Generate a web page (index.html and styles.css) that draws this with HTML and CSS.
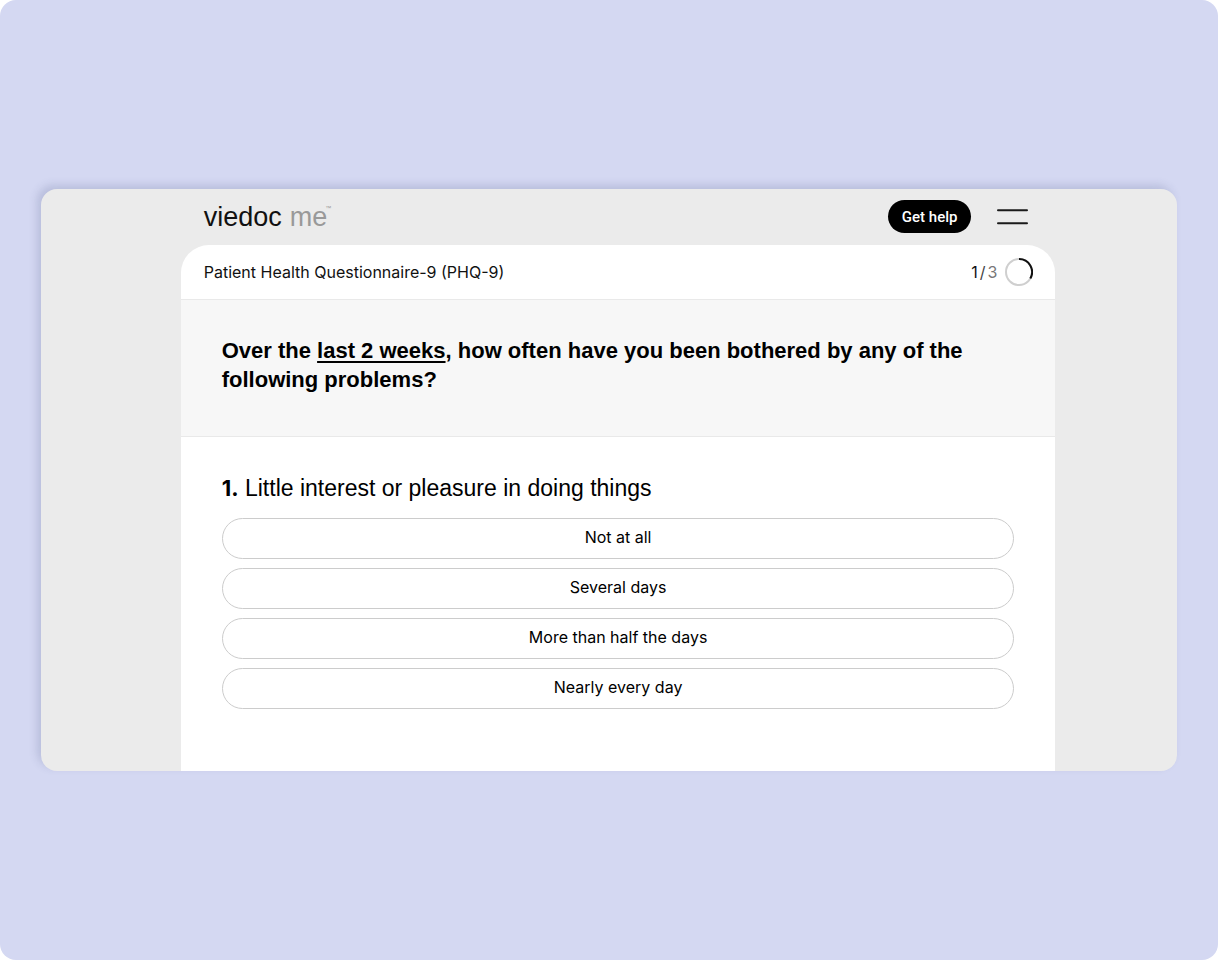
FILE: index.html
```html
<!DOCTYPE html>
<html lang="en">
<head>
<meta charset="utf-8">
<meta name="viewport" content="width=device-width, initial-scale=1">
<title>Patient Health Questionnaire-9 (PHQ-9)</title>
<link rel="stylesheet" href="styles.css">
</head>
<body>
<div class="stage">
  <div class="window">
    <header class="topbar">
      <a class="logo" href="#">viedoc <span class="logo-me">me</span><span class="logo-tm">™</span></a>
      <div class="topbar-actions">
        <button class="help" type="button">Get help</button>
        <button class="menu" type="button" aria-label="Menu">
          <svg width="31" height="19" viewBox="0 0 31 19" aria-hidden="true"><path d="M1 3.3h29M1 16.3h29" stroke="#1a1a1a" stroke-width="2" stroke-linecap="round"/></svg>
        </button>
      </div>
    </header>
    <main class="card">
      <div class="form-bar">
        <h1 class="form-title">Patient Health Questionnaire-9 (PHQ-9)</h1>
        <div class="progress">
          <span class="count"><span>1</span><span class="count-slash">/</span><span class="count-total">3</span></span>
          <svg width="28" height="28" viewBox="0 0 28 28" fill="none" aria-hidden="true"><circle cx="14" cy="14" r="13" stroke="#cfcfcf" stroke-width="2"/><path d="M14 1A13 13 0 0 1 25.3 20.5" stroke="#111" stroke-width="2"/></svg>
        </div>
      </div>
      <section class="prompt">
        <h2 class="prompt-text">Over the <u class="period">last 2 weeks</u>, how often have you been bothered by any of the following problems?</h2>
      </section>
      <section class="question">
        <h3 class="question-text" id="q1"><b class="number">1.</b> Little interest or pleasure in doing things</h3>
        <div class="options" role="group" aria-labelledby="q1">
          <button class="option" type="button">Not at all</button>
          <button class="option" type="button">Several days</button>
          <button class="option" type="button">More than half the days</button>
          <button class="option" type="button">Nearly every day</button>
        </div>
      </section>
    </main>
  </div>
</div>
</body>
</html>
```
FILE: styles.css
```css
* {
  box-sizing: border-box;
}

body {
  margin: 0;
  background: #fff;
  color: #000;
  font-family: Inter, "Liberation Sans", sans-serif;
}

button {
  font: inherit;
  color: inherit;
  cursor: pointer;
}

h1, h2, h3 {
  margin: 0;
}

.stage {
  min-height: 100vh;
  padding: 41px;
  display: flex;
  align-items: center;
  background: #d4d8f2;
  border-radius: 16px;
}

.window {
  flex: 1;
  min-width: 0;
  padding: 0 10.7% 0 12.3%;
  background: #ebebeb;
  border-radius: 16px;
  overflow: hidden;
  box-shadow: -4px -4px 8px rgba(60, 70, 120, 0.18);
}

.topbar {
  height: 56px;
  padding: 0 27px 1px 23px;
  display: flex;
  align-items: center;
  justify-content: space-between;
}

.logo {
  display: flex;
  align-items: center;
  gap: 8px;
  color: #111;
  font: 27px/32px "Liberation Sans", sans-serif;
  text-decoration: none;
}

.logo-me {
  color: #999;
}

.logo-tm {
  align-self: flex-start;
  margin-left: -10px;
  color: #999;
  font-size: 6px;
  line-height: 14px;
}

.topbar-actions {
  display: flex;
  align-items: center;
  gap: 26px;
}

.help {
  height: 33px;
  padding: 0 14px;
  border: 0;
  border-radius: 17px;
  background: #000;
  color: #fff;
  font: 500 15px/20px Roboto, sans-serif;
}

.menu {
  display: flex;
  padding: 0;
  border: 0;
  background: none;
}

.card {
  background: #fff;
  border-radius: 28px 28px 0 0;
  overflow: hidden;
}

.form-bar {
  min-height: 54px;
  padding: 0 22px 0 23px;
  display: flex;
  align-items: center;
  justify-content: space-between;
}

.form-title {
  color: #111;
  font-size: 16px;
  line-height: 20px;
  font-weight: 400;
}

.progress {
  display: flex;
  align-items: center;
  gap: 8px;
}

.count {
  display: flex;
  gap: 2px;
  color: #111;
  font-size: 16px;
  line-height: 20px;
}

.count-slash {
  color: #444;
}

.count-total {
  color: #777;
}

.prompt {
  padding: 36px 41px 42px;
  border: solid #e9e9e9;
  border-width: 1px 0;
  background: #f7f7f7;
}

.prompt-text {
  font-family: "Liberation Sans", sans-serif;
  font-size: 22px;
  line-height: 29px;
  font-weight: 700;
}

.period {
  text-decoration-thickness: 2px;
  text-underline-offset: 3px;
}

.question {
  padding: 37px 41px 62px;
}

.question-text {
  font-family: "Liberation Sans", sans-serif;
  font-size: 23px;
  line-height: 29px;
  font-weight: 400;
}

.number {
  font-family: Inter, sans-serif;
  font-size: 22px;
  font-weight: 700;
}

.options {
  margin-top: 15px;
  display: grid;
  gap: 9px;
}

.option {
  height: 41px;
  padding: 0 12px 3px;
  border: 1px solid #ccc;
  border-radius: 21px;
  background: #fff;
  font-size: 16px;
  line-height: 20px;
}
```
